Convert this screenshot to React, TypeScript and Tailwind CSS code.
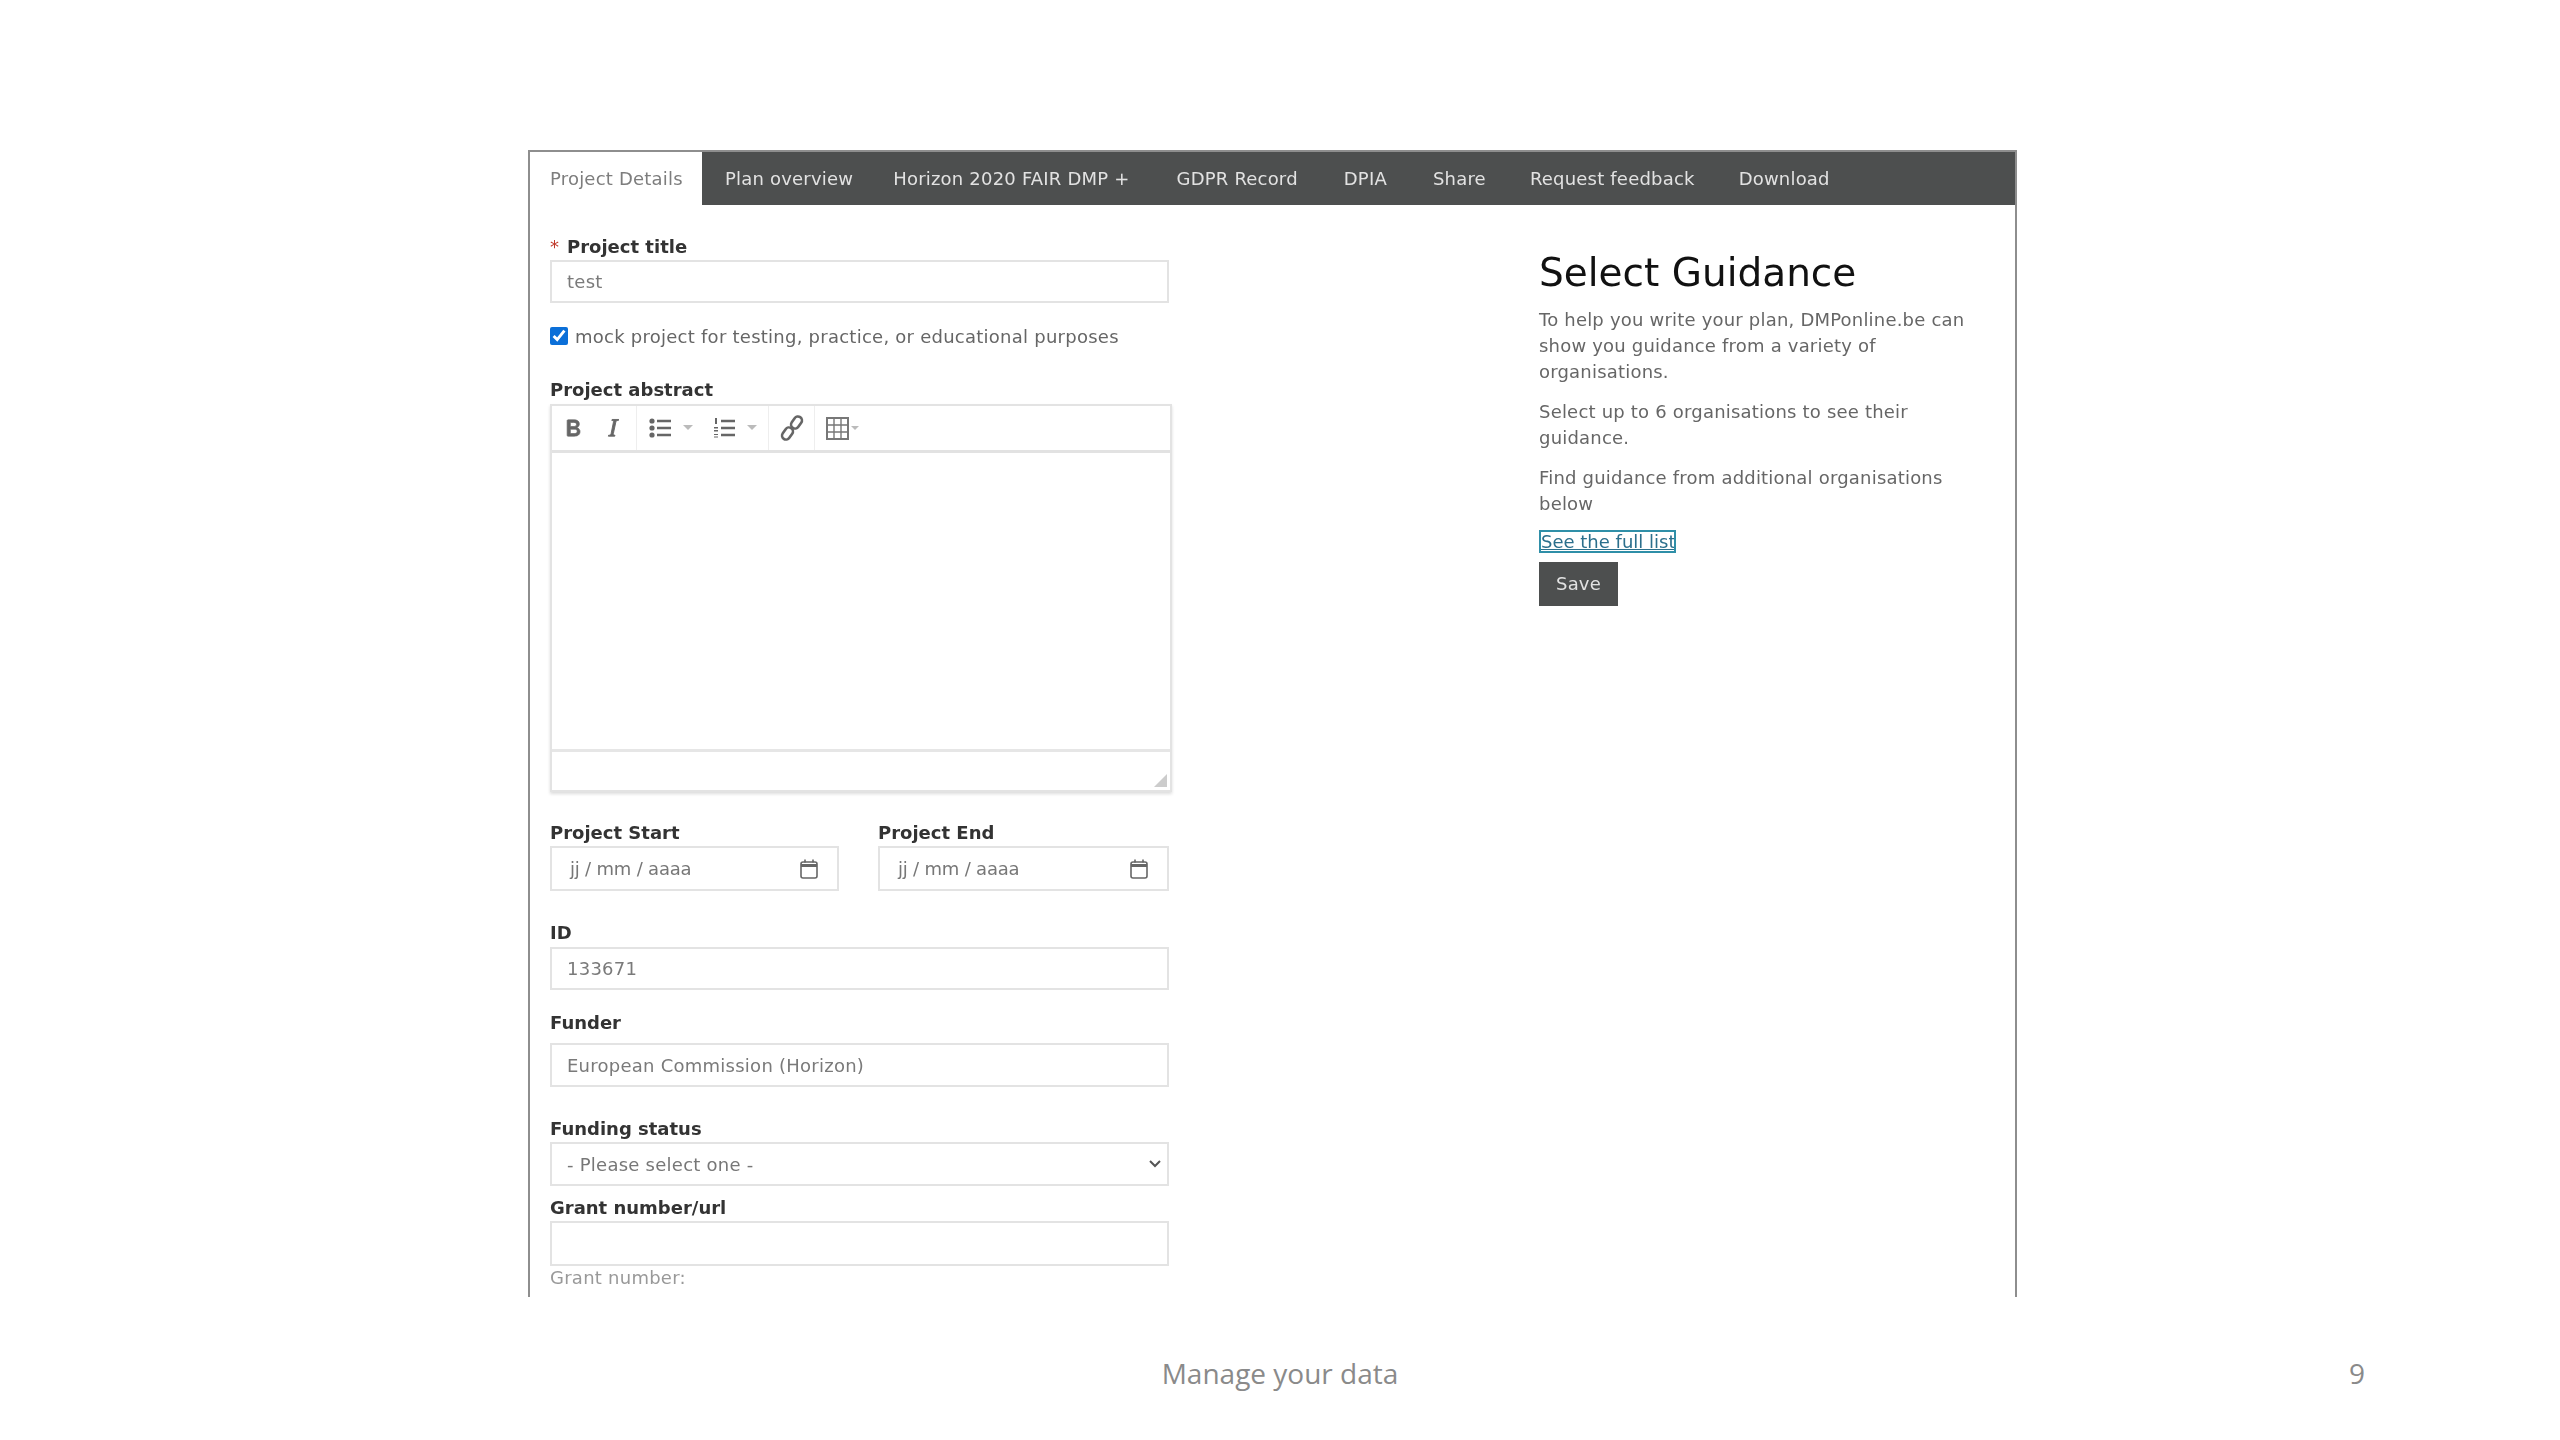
import { useState } from "react";

const font = "font-['DejaVu_Sans',sans-serif]";

const tabs = [
  { label: "Plan overview", cls: "ml-[23px]" },
  { label: "Horizon 2020 FAIR DMP +", cls: "ml-[40px]" },
  { label: "GDPR Record", cls: "ml-[47px]" },
  { label: "DPIA", cls: "ml-[46px]" },
  { label: "Share", cls: "ml-[46px]" },
  { label: "Request feedback", cls: "ml-[44px]" },
  { label: "Download", cls: "ml-[44px]" },
];

function Label({ children, className = "" }: { children: React.ReactNode; className?: string }) {
  return (
    <label className={`block text-[18px] leading-[20px] font-bold text-[#333] ${className}`}>
      {children}
    </label>
  );
}

function TextBox({ value = "", className = "" }: { value?: string; className?: string }) {
  return (
    <div
      className={`flex h-[43px] w-[619px] items-center border-2 border-[#e3e3e3] pl-[15px] text-[18px] tracking-[0.25px] text-[#7a7a7a] ${className}`}
    >
      {value}
    </div>
  );
}

function CalendarIcon() {
  return (
    <svg width="18" height="20" viewBox="0 0 18 20" fill="none" stroke="#666" strokeWidth="1.6">
      <rect x="1" y="3" width="16" height="16" rx="2" />
      <path d="M1 6.5h16" strokeWidth="3" />
      <path d="M5 0.5v3M13 0.5v3" />
    </svg>
  );
}

function DateBox({ className = "" }: { className?: string }) {
  return (
    <div
      className={`flex h-[45px] items-center justify-between border-2 border-[#e3e3e3] pl-[18px] pr-[19px] text-[18px] text-[#777] ${className}`}
    >
      <span className="tracking-[-0.2px]">jj / mm / aaaa</span>
      <CalendarIcon />
    </div>
  );
}

function Caret() {
  return (
    <svg width="10" height="6" viewBox="0 0 10 6" className="ml-[10px]">
      <path d="M0 0h10L5 5z" fill="#bbb" />
    </svg>
  );
}

function Toolbar() {
  return (
    <div className="flex h-[47px] items-center border-b-[3px] border-[#e2e2e2] text-[#666]">
      <div className="flex h-full w-[85px] items-center gap-[12px] border-r border-[#eee] pl-[7px]">
        <svg width="28" height="28" viewBox="0 0 24 24" fill="#666" stroke="#666" strokeWidth="0.6">
          <path d="M7.8 19c-.3 0-.5 0-.6-.2l-.2-.5V5.7c0-.2 0-.4.2-.5l.6-.2h5c1.5 0 2.7.3 3.5 1 .7.6 1.1 1.4 1.1 2.5a3 3 0 0 1-.6 1.9c-.4.6-1 1-1.6 1.2.4.1.9.3 1.3.6s.8.7 1 1.2c.4.4.5 1 .5 1.6 0 1.3-.4 2.3-1.3 3-.8.7-2.1 1-3.8 1H7.8zm5-8.3c.6 0 1.2-.1 1.6-.5.4-.3.6-.7.6-1.3 0-1.1-.8-1.7-2.4-1.7H9.7v3.5h3.1zm.5 6c.7 0 1.3-.1 1.7-.4.4-.4.6-.9.6-1.5s-.2-1-.7-1.4c-.4-.3-1-.4-2-.4H9.7v3.8h3.6z" />
        </svg>
        <svg width="28" height="28" viewBox="0 0 24 24" fill="#666" stroke="#666" strokeWidth="0.8">
          <path d="M16.7 4.7l-.1.9h-.3c-.6 0-1 0-1.4.3-.3.3-.4.6-.5 1.1l-2.1 9.8v.6c0 .5.4.8 1.2.8h.2l-.2.8H8l.2-.8h.2c1.1 0 1.8-.5 2-1.5l2-9.8.1-.5c0-.6-.4-.8-1.2-.8h-.3l.2-.9h5.8z" />
        </svg>
      </div>
      <div className="flex h-full w-[132px] items-center border-r border-[#eee] pl-[12px]">
        <svg width="24" height="22" viewBox="0 0 24 22" fill="#666">
          <circle cx="3" cy="4" r="2.6" />
          <circle cx="3" cy="11" r="2.6" />
          <circle cx="3" cy="18" r="2.6" />
          <path d="M8 2.8h14v2.4H8zM8 9.8h14v2.4H8zM8 16.8h14v2.4H8z" />
        </svg>
        <Caret />
        <svg width="24" height="22" viewBox="0 0 24 22" fill="#666" className="ml-[20px]">
          <path d="M2 1h2v6H2zM1 10h4v1.5H1zM1 13h4v1.5H1zM1 17h4v1H1zM1 19.5h4v1H1z" />
          <path d="M8 2.8h14v2.4H8zM8 9.8h14v2.4H8zM8 16.8h14v2.4H8z" />
        </svg>
        <Caret />
      </div>
      <div className="flex h-full w-[46px] items-center justify-center border-r border-[#eee]">
        <svg width="24" height="28" viewBox="0 0 24 28" fill="none" stroke="#666" strokeWidth="2.6">
          <rect x="12.5" y="2" width="8" height="13" rx="4" transform="rotate(35 16.5 8.5)" />
          <rect x="3.5" y="13" width="8" height="13" rx="4" transform="rotate(35 7.5 19.5)" />
        </svg>
      </div>
      <div className="flex items-center pl-[11px]">
        <svg width="23" height="23" viewBox="0 0 23 23" fill="none" stroke="#777" strokeWidth="2">
          <rect x="1" y="1" width="21" height="21" />
          <path d="M1 8h21M1 15h21M8 1v21M15 1v21" strokeWidth="1.4" />
        </svg>
        <svg width="8" height="5" viewBox="0 0 10 6" className="ml-[2px]">
          <path d="M0 0h10L5 5z" fill="#bbb" />
        </svg>
      </div>
    </div>
  );
}

export default function App() {
  const [mock, setMock] = useState(true);

  return (
    <div className={`flex h-[1440px] w-[2560px] flex-col overflow-hidden bg-white ${font}`}>
      <main className="ml-[528px] mt-[150px] h-[1147px] w-[1489px] overflow-hidden border-x-2 border-t-2 border-[#8e8e8e] blur-[0.6px]">
        <div className="flex h-[53px] items-center bg-[#4d4f4f] text-[18px] tracking-[0.2px] text-[#e2e2e2]">
          <div className="flex h-full w-[172px] items-center bg-white pl-[20px] text-[#7d7d7d]">
            Project Details
          </div>
          {tabs.map((t) => (
            <span key={t.label} className={t.cls}>
              {t.label}
            </span>
          ))}
        </div>

        <div className="flex">
          <form className="ml-[20px] w-[624px] pt-[32px]">
            <Label>
              <span className="mr-[8px] font-normal text-[#c0392b]">*</span>Project title
            </Label>
            <TextBox value="test" className="mt-[3px]" />

            <div className="mt-[22px] flex h-[22px] items-center text-[18px] tracking-[0.25px] text-[#666]">
              <input
                type="checkbox"
                checked={mock}
                onChange={() => setMock(!mock)}
                className="mr-[7px] h-[18px] w-[18px] accent-[#0b6fd8]"
              />
              mock project for testing, practice, or educational purposes
            </div>

            <Label className="mt-[33px]">Project abstract</Label>
            <div className="mt-[4px] w-[622px] border-2 border-[#e3e3e3] shadow-[0_2px_3px_#ddd]">
              <Toolbar />
              <div className="h-[299px] border-b-[3px] border-[#e6e6e6]" />
              <div className="flex h-[38px] items-end justify-end pr-[3px] pb-[3px]">
                <svg width="13" height="13" viewBox="0 0 13 13">
                  <path d="M13 0v13H0z" fill="#ccc" />
                </svg>
              </div>
            </div>

            <div className="mt-[31px] flex gap-[39px]">
              <div>
                <Label>Project Start</Label>
                <DateBox className="mt-[3px] w-[289px]" />
              </div>
              <div>
                <Label>Project End</Label>
                <DateBox className="mt-[3px] w-[291px]" />
              </div>
            </div>

            <Label className="mt-[32px]">ID</Label>
            <TextBox value="133671" className="mt-[4px]" />

            <Label className="mt-[23px]">Funder</Label>
            <TextBox value="European Commission (Horizon)" className="mt-[10px] h-[44px]" />

            <Label className="mt-[32px]">Funding status</Label>
            <div className="mt-[3px] flex h-[44px] w-[619px] items-center justify-between border-2 border-[#e3e3e3] pl-[15px] pr-[6px] text-[18px] tracking-[0.25px] text-[#777]">
              - Please select one -
              <svg width="12" height="8" viewBox="0 0 12 8" fill="none" stroke="#555" strokeWidth="2">
                <path d="M1 1l5 5 5-5" />
              </svg>
            </div>

            <Label className="mt-[12px]">Grant number/url</Label>
            <TextBox className="mt-[3px] h-[45px]" />
            <div className="mt-[1px] text-[18px] leading-[22px] tracking-[0.25px] text-[#999]">Grant number:</div>
          </form>

          <aside className="ml-[365px] w-[450px] pt-[44px] text-[18px] leading-[26px] tracking-[0.2px] text-[#666]">
            <h1 className="text-[39px] leading-[48px] font-normal tracking-normal text-[#111]">Select Guidance</h1>
            <p className="mt-[10px]">
              To help you write your plan, DMPonline.be can
              <br />
              show you guidance from a variety of
              <br />
              organisations.
            </p>
            <p className="mt-[14px]">
              Select up to 6 organisations to see their
              <br />
              guidance.
            </p>
            <p className="mt-[14px]">
              Find guidance from additional organisations
              <br />
              below
            </p>
            <a className="mt-[13px] block h-[23px] w-[137px] overflow-hidden border-2 border-[#2f8fa8] text-center text-[18px] leading-[19px] tracking-normal whitespace-nowrap text-[#2b6f8c] underline">
              See the full list
            </a>
            <button className="mt-[9px] block h-[44px] w-[79px] bg-[#4d4f4f] text-center text-[18px] text-[#e2e2e2]">
              Save
            </button>
          </aside>
        </div>
      </main>

      <footer className="relative mt-[56px] h-[40px] font-['Open_Sans',sans-serif] text-[28px] leading-[40px] text-[#8a8a8a]">
        <div className="text-center">Manage your data</div>
        <div className="absolute right-[195px] top-0">9</div>
      </footer>
    </div>
  );
}
